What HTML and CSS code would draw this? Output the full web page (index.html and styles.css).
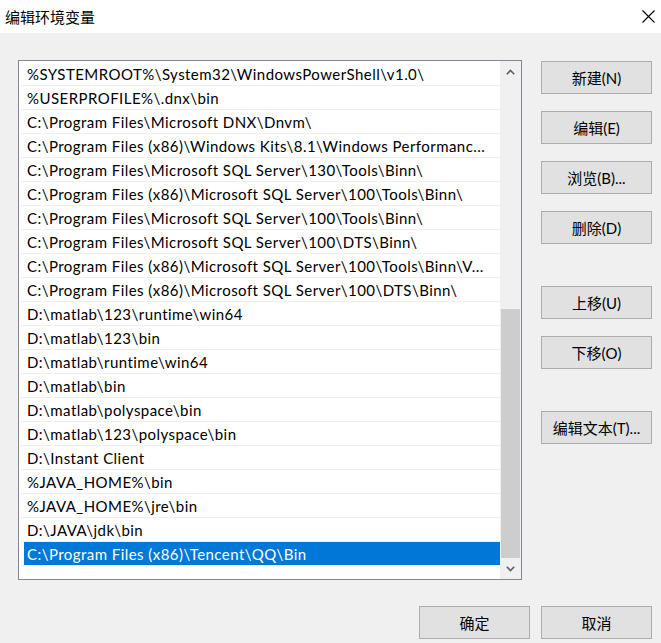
FILE: index.html
```html
<!DOCTYPE html>
<html lang="zh-CN">
<head>
<meta charset="utf-8">
<title>编辑环境变量</title>
<link rel="stylesheet" href="styles.css">
</head>
<body>
<div class="window">
  <div class="titlebar">
    <span class="title">编辑环境变量</span>
    <svg class="close" width="13" height="13" viewBox="0 0 13 13">
      <path d="M0.5 0.5 L12.5 12.5 M12.5 0.5 L0.5 12.5" stroke="#000" stroke-width="1.1" fill="none"/>
    </svg>
  </div>
  <div class="content">
    <div class="main">
      <div class="listbox">
        <div class="rows">
          <div class="row"><span class="cell">%SYSTEMROOT%\System32\WindowsPowerShell\v1.0\</span></div>
          <div class="row"><span class="cell">%USERPROFILE%\.dnx\bin</span></div>
          <div class="row"><span class="cell">C:\Program Files\Microsoft DNX\Dnvm\</span></div>
          <div class="row"><span class="cell">C:\Program Files (x86)\Windows Kits\8.1\Windows Performanc...</span></div>
          <div class="row"><span class="cell">C:\Program Files\Microsoft SQL Server\130\Tools\Binn\</span></div>
          <div class="row"><span class="cell">C:\Program Files (x86)\Microsoft SQL Server\100\Tools\Binn\</span></div>
          <div class="row"><span class="cell">C:\Program Files\Microsoft SQL Server\100\Tools\Binn\</span></div>
          <div class="row"><span class="cell">C:\Program Files\Microsoft SQL Server\100\DTS\Binn\</span></div>
          <div class="row"><span class="cell">C:\Program Files (x86)\Microsoft SQL Server\100\Tools\Binn\V...</span></div>
          <div class="row"><span class="cell">C:\Program Files (x86)\Microsoft SQL Server\100\DTS\Binn\</span></div>
          <div class="row"><span class="cell">D:\matlab\123\runtime\win64</span></div>
          <div class="row"><span class="cell">D:\matlab\123\bin</span></div>
          <div class="row"><span class="cell">D:\matlab\runtime\win64</span></div>
          <div class="row"><span class="cell">D:\matlab\bin</span></div>
          <div class="row"><span class="cell">D:\matlab\polyspace\bin</span></div>
          <div class="row"><span class="cell">D:\matlab\123\polyspace\bin</span></div>
          <div class="row"><span class="cell">D:\Instant Client</span></div>
          <div class="row"><span class="cell">%JAVA_HOME%\bin</span></div>
          <div class="row"><span class="cell">%JAVA_HOME%\jre\bin</span></div>
          <div class="row"><span class="cell">D:\JAVA\jdk\bin</span></div>
          <div class="row selected"><span class="cell">C:\Program Files (x86)\Tencent\QQ\Bin</span></div>
        </div>
        <div class="scrollbar">
          <div class="arrow">
            <svg width="9" height="6" viewBox="0 0 9 6"><path d="M0.8 5.2 L4.5 1.5 L8.2 5.2" stroke="#606060" stroke-width="1.6" fill="none"/></svg>
          </div>
          <div class="track"><div class="thumb"></div></div>
          <div class="arrow">
            <svg width="9" height="6" viewBox="0 0 9 6"><path d="M0.8 0.8 L4.5 4.5 L8.2 0.8" stroke="#606060" stroke-width="1.6" fill="none"/></svg>
          </div>
        </div>
      </div>
      <div class="side">
        <div class="group">
          <button class="btn">新建(N)</button>
          <button class="btn">编辑(E)</button>
          <button class="btn">浏览(B)...</button>
          <button class="btn">删除(D)</button>
        </div>
        <div class="group">
          <button class="btn">上移(U)</button>
          <button class="btn">下移(O)</button>
        </div>
        <div class="group">
          <button class="btn">编辑文本(T)...</button>
        </div>
      </div>
    </div>
    <div class="footer">
      <button class="btn">确定</button>
      <button class="btn">取消</button>
    </div>
  </div>
</div>
</body>
</html>
```

FILE: styles.css
```css
html, body {
  margin: 0;
  padding: 0;
}

body {
  width: 661px;
  height: 643px;
  overflow: hidden;
  background: #f0f0f0;
  font-family: "Lato", "Noto Sans CJK SC", sans-serif;
  font-size: 15px;
  color: #000;
}

.titlebar {
  height: 33px;
  background: #fff;
  display: flex;
  align-items: center;
  justify-content: space-between;
  padding: 0 6px 0 5px;
}

.title {
  font-family: "Noto Sans CJK SC", sans-serif;
  font-size: 15px;
  line-height: 1;
}

.close {
  display: block;
}

.main {
  display: flex;
  align-items: flex-start;
  padding-left: 18px;
}

.listbox {
  margin-top: 27px;
  width: 504px;
  height: 520px;
  box-sizing: border-box;
  border: 1px solid #828790;
  background: #fff;
  display: flex;
}

.rows {
  flex: 1;
  min-width: 0;
  padding: 1px 0 0 1px;
  overflow: hidden;
}

.row {
  height: 23px;
  border-bottom: 1px solid #f0f0f0;
  padding-left: 4px;
  display: flex;
}

.cell {
  flex: 1;
  min-width: 0;
  padding-left: 3px;
  line-height: 24px;
  letter-spacing: 0.45px;
  white-space: nowrap;
  overflow: hidden;
}

.row.selected .cell {
  background: #0078d7;
  color: #fff;
}

.scrollbar {
  width: 21px;
  background: #f0f0f0;
  display: flex;
  flex-direction: column;
}

.arrow {
  height: 21px;
  display: flex;
  align-items: center;
  justify-content: center;
}

.arrow svg {
  display: block;
}

.track {
  flex: 1;
  display: flex;
  flex-direction: column;
  justify-content: flex-end;
}

.thumb {
  height: 249px;
  margin: 0 1px;
  background: #cdcdcd;
}

.side {
  margin-left: 19px;
  margin-top: 28px;
  display: flex;
  flex-direction: column;
  gap: 42px;
}

.group {
  display: flex;
  flex-direction: column;
  gap: 17px;
}

.btn {
  width: 111px;
  height: 33px;
  box-sizing: border-box;
  border: 1px solid #adadad;
  background: #e1e1e1;
  font: inherit;
  color: #000;
  padding: 0;
  margin: 0;
  display: flex;
  align-items: center;
  justify-content: center;
}

.footer {
  margin-top: 26px;
  display: flex;
  justify-content: flex-end;
  gap: 11px;
  padding-right: 9px;
}
```
